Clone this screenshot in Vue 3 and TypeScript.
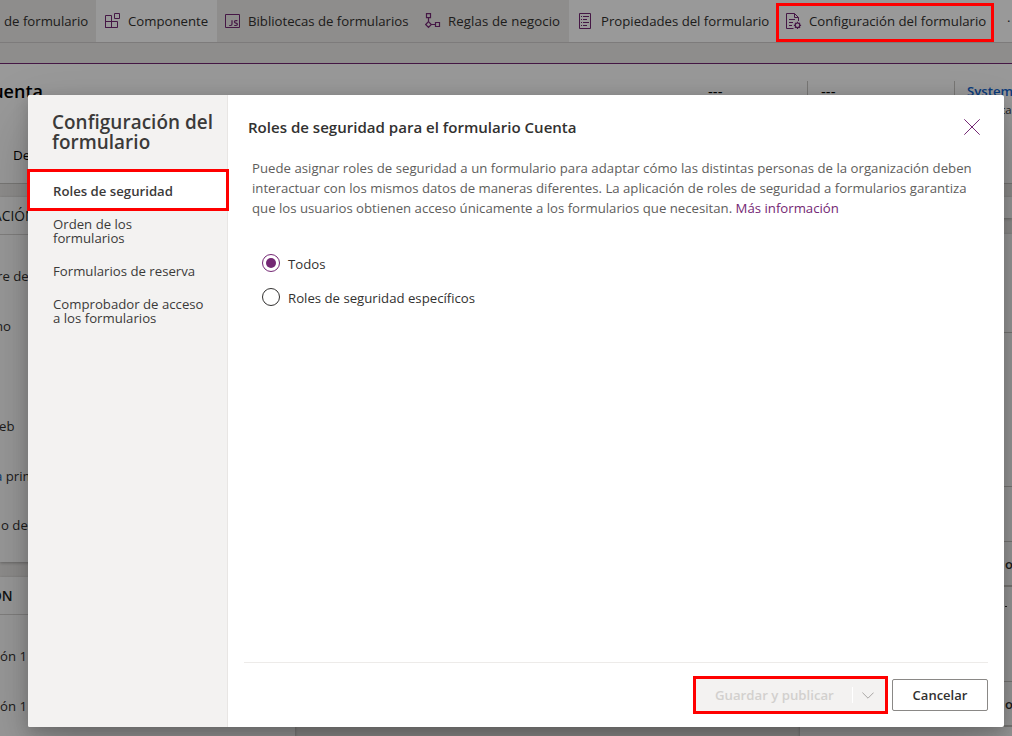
<script setup lang="ts">
import { ref } from 'vue'

const navItems = [
  { id: 'roles', label: 'Roles de seguridad' },
  { id: 'orden', label: 'Orden de los formularios' },
  { id: 'reserva', label: 'Formularios de reserva' },
  { id: 'acceso', label: 'Comprobador de acceso a los formularios' },
]
const activeNav = ref('roles')

const options = [
  { id: 'todos', label: 'Todos' },
  { id: 'especificos', label: 'Roles de seguridad específicos' },
]
const selected = ref('todos')
</script>

<template>
  <div class="page">
    <header class="toolbar">
      <div class="cmd cmd-form">de formulario</div>
      <div class="cmd cmd-comp light">
        <svg width="16" height="16" viewBox="0 0 16 16" fill="none" stroke="currentColor">
          <path d="M.5 2.5h6v12h-6zM.5 8.5h12v6h-12zM6.5 8.5v6M9.5.5h5v5h-5z" />
        </svg>
        <span>Componente</span>
      </div>
      <div class="cmd cmd-lib">
        <svg width="16" height="16" viewBox="0 0 16 16" fill="none" stroke="currentColor">
          <path d="M.5 1.5h14v13H.5z" />
          <path stroke-width="1.2" d="M7 7.200v3.800q0 1.500-1.500 1.500H4.200M12.400 7.700h-1.500q-1.500 0-1.500 1.100t1.500 1.300 1.500 1.200-1.500 1.200H9.200" />
        </svg>
        <span>Bibliotecas de formularios</span>
      </div>
      <div class="cmd cmd-rules">
        <svg width="16" height="16" viewBox="0 0 16 16" fill="none" stroke="currentColor">
          <path stroke-width="1.2" d="M1.500.6h4v4h-4zM3.500 4.600V9M3.500 8.700l2.800 2.800-2.800 2.800L.7 11.500zM6.300 11.500h4.200M10.500 9.500h4v4h-4z" />
        </svg>
        <span>Reglas de negocio</span>
      </div>
      <div class="cmd cmd-props light">
        <svg width="16" height="16" viewBox="0 0 16 16" fill="none" stroke="currentColor">
          <path d="M1.500.5h11v15h-11zM3 3.500h1M5 3.500h6M3 6.500h1M5 6.500h4M3 9.500h1M5 9.500h6M3 12.500h1M5 12.500h4" />
        </svg>
        <span>Propiedades del formulario</span>
      </div>
      <div class="cmd cmd-config light">
        <svg width="16" height="16" viewBox="0 0 16 16" fill="none" stroke="currentColor">
          <path d="M7.500 15.500h-7V.5h8l4 4V8M8.500.5v4h4M3 6.500h6M3 9.500h4M3 12.500h3" />
          <circle cx="11.500" cy="12.300" r="2.300" stroke-width="1.2" />
          <path stroke-width="1.2" d="M11.500 8.700V10M11.500 14.600v1.300M7.900 12.300h1.300M13.800 12.300h1.300M9 9.800l.9.900M13.100 13.900l.9.900M14 9.800l-.9.900M9.900 13.900l-.9.900" />
        </svg>
        <span>Configuración del formulario</span>
      </div>
      <div class="cmd cmd-more light">···</div>
    </header>

    <main class="canvas">
      <section class="record">
        <div class="record-top">
          <h1 class="clip-title">uenta</h1>
          <div class="stat stat-a">---</div>
          <div class="stat stat-b">---</div>
          <div class="stat stat-c"><b>System</b><small>Propieta</small></div>
        </div>
        <div class="tab">De</div>
      </section>

      <div class="columns">
        <div class="column">
          <section class="card card-account">
            <h2><span>ACIÓN</span></h2>
            <p class="f1"><span>re de</span></p>
            <p class="f2"><span>no</span></p>
            <p class="f3"><span>eb</span></p>
            <p class="f4"><span><i>a</i> prim</span></p>
            <p class="f5"><span>o de</span></p>
          </section>
          <section class="card card-address">
            <h2><span>ÓN</span></h2>
            <p class="g1"><span>ón 1</span></p>
            <p class="g2"><span>ón 1</span></p>
          </section>
        </div>
        <div class="column-right">
          <section class="card strip"></section>
          <section class="card side">
            <div class="row r1"></div>
            <div class="row r2"></div>
            <div class="row r3"></div>
            <div class="row r4"><b>o</b></div>
            <div class="row r5"><span class="dash"></span></div>
            <div class="row r6"><b>o</b></div>
          </section>
        </div>
      </div>
    </main>

    <div class="scrim"></div>
    <div class="mark mark-config"></div>

    <div class="dialog" role="dialog">
      <aside class="sidebar">
        <h2>Configuración del formulario</h2>
        <nav>
          <a
            v-for="item in navItems"
            :key="item.id"
            :class="{ active: item.id === activeNav }"
            @click="activeNav = item.id"
          ><span>{{ item.label }}</span></a>
        </nav>
      </aside>
      <section class="content">
        <div class="heading">
          <h3>Roles de seguridad para el formulario Cuenta</h3>
          <svg class="close" width="16" height="16" viewBox="0 0 16 16" fill="none" stroke="currentColor">
            <path d="M.3.3l15.400 15.400M15.700.3L.3 15.700" />
          </svg>
        </div>
        <p class="intro">
          <span class="line-1">Puede asignar roles de seguridad a un formulario para adaptar cómo las distintas personas de la organización deben</span><br />
          interactuar con los mismos datos de maneras diferentes. La aplicación de roles de seguridad a formularios garantiza<br />
          que los usuarios obtienen acceso únicamente a los formularios que necesitan. <a>Más información</a>
        </p>
        <div class="options">
          <label v-for="o in options" :key="o.id" @click="selected = o.id">
            <span class="radio" :class="{ checked: selected === o.id }"></span>
            <span>{{ o.label }}</span>
          </label>
        </div>
        <footer>
          <div class="split">
            <span class="save">Guardar y publicar</span>
            <span class="chevron">
              <svg width="12" height="7" viewBox="0 0 12 7" fill="none" stroke="currentColor">
                <path d="M.4.6L6 6.200 11.600.6" />
              </svg>
            </span>
          </div>
          <button class="cancel">Cancelar</button>
        </footer>
      </section>
    </div>
  </div>
</template>

<style>
body { margin: 0; }
</style>

<style scoped>
* { box-sizing: border-box; }
h1, h2, h3, p { margin: 0; font-weight: 600; }
.page {
  position: relative;
  width: 1012px;
  height: 736px;
  overflow: hidden;
  background: #edebe9;
  color: #323130;
  font: 13.2px/20px "Open Sans", "Noto Sans", sans-serif;
}
svg { display: block; flex: none; }

.toolbar {
  display: flex;
  height: 43px;
  border-bottom: 1px solid #d0cecd;
  background: #edebe9;
}
.cmd { display: flex; flex: none; align-items: center; height: 42px; gap: 7px; white-space: nowrap; }
.cmd svg { color: #742774; }
.cmd-form { width: 96px; padding-left: 4px; }
.cmd-comp { width: 121px; padding-left: 9px; }
.cmd-lib { width: 200px; padding-left: 8px; }
.cmd-rules { width: 152px; padding-left: 8px; letter-spacing: .12px; }
.cmd-props { width: 207px; padding-left: 9px; }
.cmd-config { width: 225px; padding-left: 10px; letter-spacing: .02px; }
.cmd-more { width: 60px; padding-left: 6px; letter-spacing: 2px; }
.light { background: #fff; }

.canvas { margin-top: 20px; border-top: 1px solid #742774; }
.record { height: 120px; background: #fff; border-bottom: 1px solid #c8c6c4; }
.record-top { display: flex; height: 62px; padding-top: 17px; color: #000; }
.clip-title {
  display: flex;
  justify-content: flex-end;
  flex: none;
  width: 43px;
  margin-right: 665px;
  overflow: hidden;
  font-size: 18px;
  line-height: 20px;
  height: 24px;
}
.stat { flex: none; line-height: 20px; height: 36px; font-size: 15px; }
.stat-a { width: 99px; }
.stat-b { width: 147px; padding-left: 13px; border-left: 1px solid #c8c6c4; }
.stat-c { padding-left: 12px; border-left: 1px solid #c8c6c4; display: flex; flex-direction: column; font-size: 13.200px; }
.stat-c b { font-weight: 600; color: #1264d0; }
.stat-c small { color: #323130; font-size: 11.300px; line-height: 17px; }
.tab { padding: 19px 0 0 13px; color: #000; font-size: 13.500px; }

.columns { display: flex; justify-content: space-between; padding-top: 13px; }
.column { width: 295px; }
.column-right { width: 212px; }
.card { background: #fff; box-shadow: 0 1px 3px rgba(0, 0, 0, .28); }
.card p, .card h2 span { font-weight: 400; }
.card h2, .card p { width: 28px; height: 20px; display: flex; overflow: hidden; white-space: nowrap; }
.card h2 { width: 100%; height: 38px; align-items: center; border-bottom: 1px solid #d6d4d2; font-size: 13.800px; color: #201f1e; }
.card i { color: #1160b7; font-style: normal; }
.card-account { height: 365px; }
.card-account h2 span { margin-left: -7px; }
.f1 { margin-top: 31px; }
.f1 span { margin-left: -3px; }
.f2 { margin-top: 30px; }
.f2 span { margin-left: -5px; }
.f3 { margin-top: 80px; }
.f3 span { margin-left: -1px; }
.f4 { margin-top: 30px; }
.f4 span { margin-left: -5px; }
.f5 { margin-top: 29px; }
.f5 span { margin-left: 1px; }
.card-address { margin-top: 15px; height: 180px; }
.card-address h2 span { margin-left: -9px; font-weight: 600; }
.g1 { margin-top: 31px; }
.g2 { margin-top: 30px; }

.strip { height: 21px; }
.side { margin-top: 16px; height: 520px; }
.row { border-bottom: 1px solid #c8c6c4; padding-left: 205px; display: flex; align-items: center; }
.row b { font-weight: 600; font-size: 13px; }
.r1 { height: 99px; }
.r2 { height: 154px; }
.r3 { height: 55px; }
.r4 { height: 45px; border-bottom-width: 2px; }
.r5 { height: 95px; padding-bottom: 56px; }
.dash { width: 2px; height: 1px; background: #323130; }
.r6 { height: 45px; border-bottom-width: 2px; }

.scrim { position: absolute; inset: 0; background: rgba(0, 0, 0, .4); }
.mark { position: absolute; border: 3px solid #f00; }
.mark-config { left: 776px; top: 3px; width: 218px; height: 39px; }

.dialog {
  position: absolute;
  left: 28px;
  top: 95px;
  width: 976px;
  height: 632px;
  display: flex;
  background: #fff;
  border-radius: 2px;
  box-shadow: 0 25.600px 57.600px rgba(0, 0, 0, .22), 0 4.800px 14.400px rgba(0, 0, 0, .18);
}
.sidebar { width: 200px; flex: none; background: #f3f2f1; border-right: 1px solid #e8e6e4; border-radius: 2px 0 0 2px; }
.sidebar h2 { width: 190px; padding: 17px 0 0 24px; height: 74px; font-size: 18.900px; line-height: 20px; letter-spacing: .05px; color: #3b3a39; }
.sidebar nav { display: flex; flex-direction: column; }
.sidebar a { display: flex; padding: 7px 20px 12px 25px; line-height: 14px; color: #3b3a39; }
.sidebar a.active {
  width: 202px;
  height: 42px;
  margin: 0 0 -1px -1px;
  padding: 2px 0 0 23px;
  align-items: center;
  background: #fff;
  border: 3px solid #f00;
  font-weight: 600;
}
.content { flex: 1; display: flex; flex-direction: column; padding: 0 16px; }
.heading { display: flex; justify-content: space-between; padding: 22px 8px 0 4px; }
.heading h3 { font-size: 15.050px; line-height: 20px; }
.close { margin-top: 2px; color: #742774; }
.intro { padding: 21px 0 0 8px; font-weight: 400; white-space: nowrap; color: #605e5c; }
.line-1 { letter-spacing: .015px; }
.intro a { color: #742774; }
.options { padding: 36px 0 0 18px; flex: 1; }
.options label { display: flex; align-items: center; height: 18px; gap: 8px; margin-bottom: 16px; }
.options label span:last-child { padding-top: 2px; }
.radio { width: 18px; height: 18px; border: 1px solid #323130; border-radius: 50%; display: flex; align-items: center; justify-content: center; }
.radio.checked { border-color: #742774; }
.radio.checked::after { content: ""; width: 10px; height: 10px; border-radius: 50%; background: #742774; }
footer { display: flex; justify-content: flex-end; align-items: center; gap: 4px; height: 65px; border-top: 1px solid #edebe9; }
.split { display: flex; align-items: center; width: 195px; height: 38px; border: 3px solid #f00; background: #f3f2f1; color: #d2d0ce; }
.save { width: 157px; padding-left: 19px; font-weight: 600; border-right: 1px solid #fff; line-height: 16px; white-space: nowrap; }
.chevron { padding-left: 9px; color: #a8a6a4; }
.cancel {
  width: 96px;
  height: 32px;
  padding: 0;
  background: #fff;
  border: 1px solid #8a8886;
  border-radius: 2px;
  color: #323130;
  font: 600 13px/20px "Open Sans", "Noto Sans", sans-serif;
}
</style>
